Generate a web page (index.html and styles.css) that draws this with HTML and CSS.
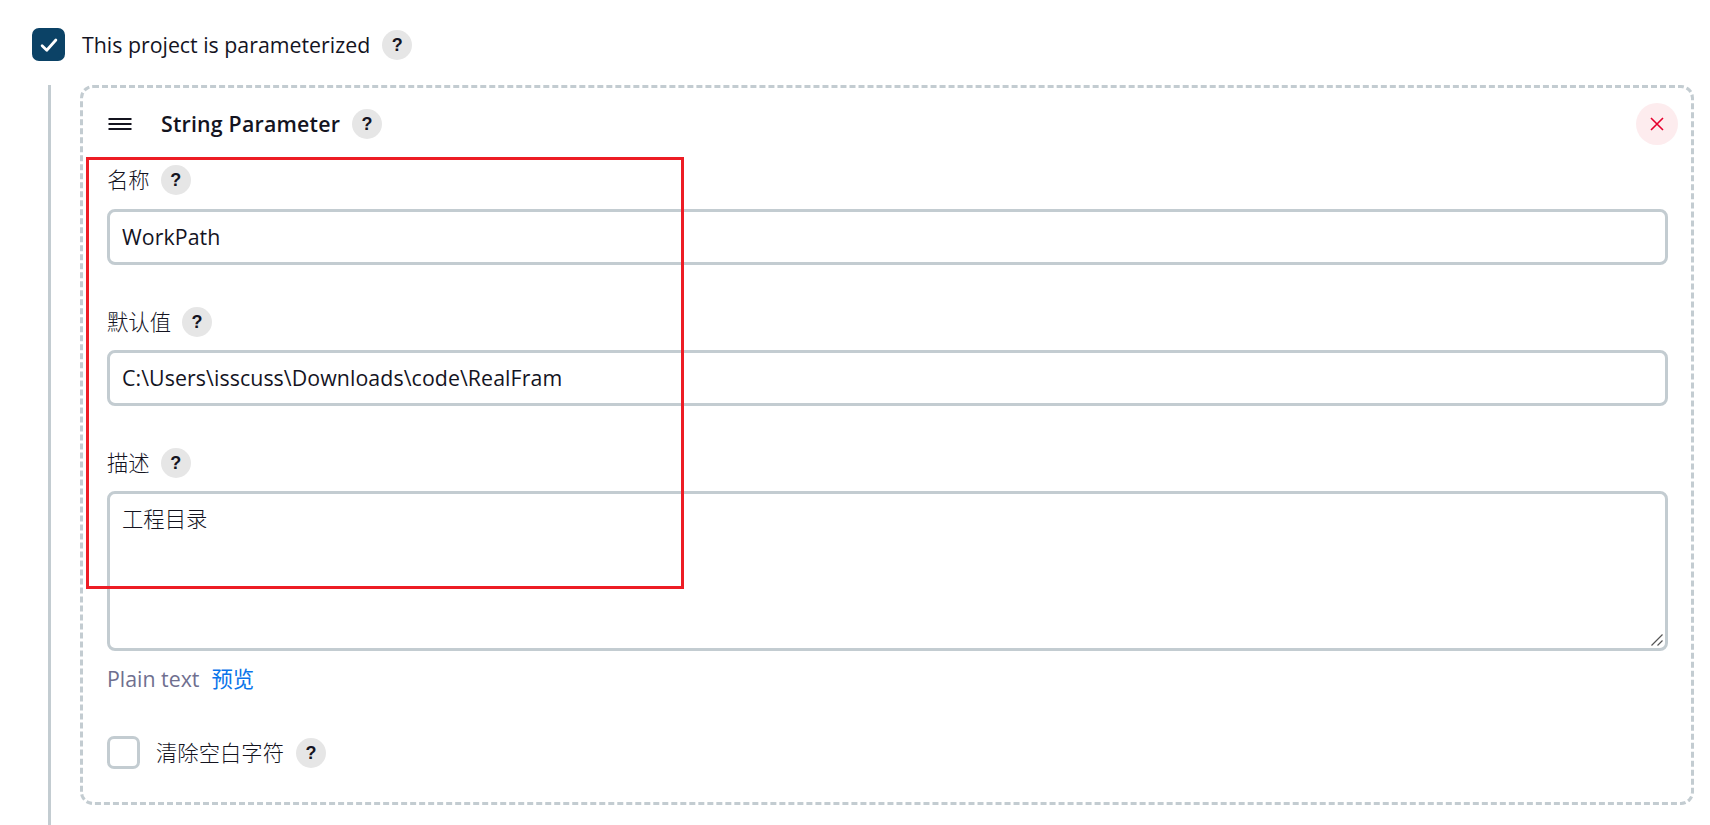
FILE: index.html
```html
<!DOCTYPE html>
<html lang="zh">
<head>
<meta charset="utf-8">
<title>String Parameter</title>
<link rel="stylesheet" href="styles.css">
</head>
<body>
<main class="page">
  <div class="check-row">
    <span class="box box-on">
      <svg class="tick" viewBox="0 0 16 16" aria-hidden="true"><path d="M2.5 8.6 6.2 12.2 13.5 4"/></svg>
    </span>
    <span class="check-label">This project is parameterized</span>
    <span class="help">?</span>
  </div>
  <div class="rail">
    <section class="card">
      <header class="card-head">
        <svg class="handle" viewBox="0 0 24 14" aria-hidden="true"><path d="M0.5 2H23.5M0.5 7H23.5M0.5 12H23.5"/></svg>
        <h2 class="card-title">String Parameter</h2>
        <span class="help">?</span>
        <button class="close" type="button" aria-label="close">
          <svg viewBox="0 0 14 14" aria-hidden="true"><path d="M1 1 13 13M13 1 1 13"/></svg>
        </button>
      </header>
      <div class="field field-first">
        <div class="field-label"><span class="cjk">名称</span><span class="help">?</span></div>
        <input class="control" type="text" value="WorkPath">
      </div>
      <div class="field">
        <div class="field-label"><span class="cjk">默认值</span><span class="help">?</span></div>
        <input class="control" type="text" value="C:\Users\isscuss\Downloads\code\RealFram">
      </div>
      <div class="field">
        <div class="field-label"><span class="cjk">描述</span><span class="help">?</span></div>
        <div class="area-wrap">
          <textarea class="control area">工程目录</textarea>
          <svg class="grip" viewBox="0 0 12 12" aria-hidden="true"><path d="M11.5 .5 .5 11.5M11.5 6.5 6.5 11.5"/></svg>
        </div>
      </div>
      <div class="format"><span class="format-name">Plain text</span><a class="format-link" href="#">预览</a></div>
      <div class="check-row trim-row">
        <span class="box"></span>
        <span class="check-label cjk">清除空白字符</span>
        <span class="help">?</span>
      </div>
    </section>
  </div>
  <div class="annotation"></div>
</main>
</body>
</html>
```

FILE: styles.css
```css
* { box-sizing: border-box; }
html, body { margin: 0; height: 100%; overflow: hidden; background: #fff; }
body {
  font-family: "Open Sans", "Noto Sans CJK SC", sans-serif;
  font-size: 21.33px;
  color: #14141f;
}
.page { position: relative; padding: 28px 0 0 32px; height: 825px; }
.cjk { font-weight: 300; }
.check-row { display: flex; align-items: center; height: 33px; }
.box {
  flex: none; width: 33px; height: 33px; border-radius: 7px;
  border: 3px solid #c3ccd1; background: #fff;
  display: flex; align-items: center; justify-content: center;
}
.box-on { background: #0b4266; border-color: #0b4266; }
.tick { width: 20px; height: 20px; fill: none; stroke: #fff; stroke-width: 2.2; stroke-linecap: round; stroke-linejoin: round; }
.check-label { margin-left: 17px; line-height: 26px; }
.check-label.cjk { margin-left: 16px; }
.help {
  flex: none; width: 30px; height: 30px; border-radius: 50%;
  background: #e6e6e6; color: #14141f;
  font: 700 18px/30px "Liberation Sans", sans-serif; text-align: center;
  margin-left: 12px;
}
.field-label .help { margin-left: 11px; }
.rail { margin: 24px 0 0 16px; height: 740px; border-left: 3px solid #c3ccd1; padding-left: 29px; }
.card {
  width: 1614px; height: 720px; border: 3px dashed #c3ccd1; border-radius: 13px;
  padding: 0 21px 0 24px;
}
.card-head { display: flex; align-items: center; height: 64px; padding-top: 7px; }
.handle { width: 24px; height: 14px; fill: none; stroke: #14141f; stroke-width: 2; margin-left: 1px; flex: none; }
.card-title { margin: 0 0 0 29px; font-size: 21.33px; font-weight: 600; line-height: 26px; letter-spacing: .2px; }
.close {
  margin-left: auto; margin-right: -8px; width: 42px; height: 42px; border: 0; border-radius: 50%;
  background: #fdecee; padding: 0; display: flex; align-items: center; justify-content: center;
}
.close svg { width: 14px; height: 14px; fill: none; stroke: #e6002d; stroke-width: 1.6; }
.field { margin-top: 42px; }
.field-first { margin-top: 13px; }
.field-first .field-label { margin-bottom: 14px; }
.field-label { display: flex; align-items: center; height: 30px; line-height: 30px; margin-bottom: 13px; }
.control {
  display: block; width: 1561px; height: 56px; border: 3px solid #c3ccd1; border-radius: 8px;
  padding: 0 12px 2px; font: inherit; letter-spacing: .08px; color: #14141f; background: #fff; outline: none;
}
.area-wrap { position: relative; width: 1561px; }
.area { height: 160px; padding: 12px 12px 10px; line-height: 26px; font-weight: 300; letter-spacing: 0; resize: none; }
.grip {
  position: absolute; right: 5px; bottom: 5px; width: 12px; height: 12px;
  fill: none; stroke: #555; stroke-width: 1.2; pointer-events: none;
}
.format { margin-top: 14px; height: 28px; line-height: 28px; display: flex; }
.format-name { color: #6f6f8f; }
.format-link { margin-left: 12px; color: #0a74ea; text-decoration: none; }
.trim-row { margin-top: 43px; }
.annotation {
  position: absolute; left: 86px; top: 157px; width: 598px; height: 432px;
  border: 3px solid #ed1c24; pointer-events: none;
}
```
